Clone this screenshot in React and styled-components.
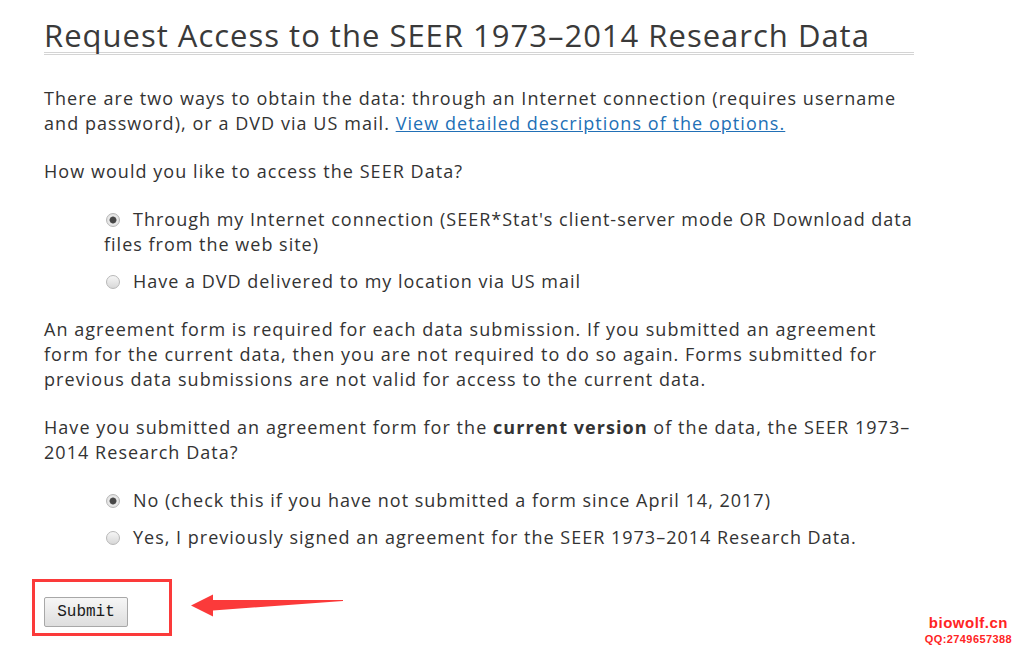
import styled, { createGlobalStyle } from "styled-components"

const GlobalStyle = createGlobalStyle`
  body {
    margin: 0;
    background: #fff;
    font-family: "Open Sans", "DejaVu Sans", sans-serif;
    color: #333;
  }
`

const Page = styled.div`
  position: relative;
  width: 1030px;
  height: 655px;
  overflow: hidden;
  padding: 18px 0 0 44px;
  box-sizing: border-box;
`
const Content = styled.div`
  width: 870px;
`
const Title = styled.h1`
  margin: 0 0 31px;
  font-family: "Open Sans", sans-serif;
  font-weight: 400;
  font-size: 31px;
  line-height: 34px;
  letter-spacing: 1px;
  color: #3a3a3a;
  border-bottom: 3px double #d4d4d4;
`
const Text = styled.p`
  margin: 23px 0;
  font-size: 18px;
  line-height: 25px;
  letter-spacing: 1.05px;
`
const Link = styled.a`
  color: #2270b6;
  text-decoration: underline;
`
const Options = styled.div`
  padding-left: 60px;
  margin: 23px 0;
  display: flex;
  flex-direction: column;
  gap: 12px;
`
const Option = styled.label`
  display: block;
  font-size: 18px;
  line-height: 25px;
  letter-spacing: 1px;
`
const Radio = styled.span`
  display: inline-block;
  width: 14px;
  height: 14px;
  margin: 0 13px 0 2px;
  vertical-align: -1px;
  border-radius: 50%;
  border: 1px solid #b8b8b8;
  box-sizing: border-box;
  background: ${props =>
    props.checked
      ? "radial-gradient(circle, #474747 0 2.8px, #8a8a8a 3.4px, #ececec 3.9px, #d4d4d4 100%)"
      : "linear-gradient(#f6f6f6, #d8d8d8)"};
`
const SubmitRow = styled.div`
  display: flex;
  align-items: flex-start;
  margin: 29px 0 0 -12px;
`
const Highlight = styled.div`
  width: 140px;
  height: 57px;
  box-sizing: border-box;
  border: 3px solid #fb3a3a;
  padding: 15px 0 0 9px;
`
const Button = styled.button`
  width: 84px;
  height: 30px;
  font-family: "Liberation Mono", monospace;
  font-size: 16px;
  color: #1a1a1a;
  border: 1px solid #a8a8a8;
  border-radius: 2px;
  background: linear-gradient(#f6f6f6, #dedede);
  padding: 0;
`
const Arrow = styled.svg`
  margin: 15px 0 0 19px;
`
const Watermark = styled.div`
  position: absolute;
  right: 18px;
  bottom: 10px;
  color: #ff2424;
  font-family: "Liberation Sans", sans-serif;
  font-weight: 700;
  text-align: center;
  line-height: 1;
`
const WaterSite = styled.div`
  font-size: 15px;
  letter-spacing: 0.5px;
`
const WaterQQ = styled.div`
  font-size: 11px;
  letter-spacing: 0.4px;
  margin-top: 4px;
`

const App = () => {
  return (
    <Page>
      <GlobalStyle />
      <Content>
        <Title>Request Access to the SEER 1973–2014 Research Data</Title>
        <Text>
          There are two ways to obtain the data: through an Internet connection (requires username
          and password), or a DVD via US mail. <Link href="#">View detailed descriptions of the options.</Link>
        </Text>
        <Text>How would you like to access the SEER Data?</Text>
        <Options>
          <Option><Radio checked />Through my Internet connection (SEER*Stat's client-server mode OR Download data files from the web site)</Option>
          <Option><Radio />Have a DVD delivered to my location via US mail</Option>
        </Options>
        <Text>
          An agreement form is required for each data submission. If you submitted an agreement
          form for the current data, then you are not required to do so again. Forms submitted for
          previous data submissions are not valid for access to the current data.
        </Text>
        <Text>
          Have you submitted an agreement form for the <b>current version</b> of the data, the SEER 1973–2014 Research Data?
        </Text>
        <Options>
          <Option><Radio checked />No (check this if you have not submitted a form since April 14, 2017)</Option>
          <Option><Radio />Yes, I previously signed an agreement for the SEER 1973–2014 Research Data.</Option>
        </Options>
        <SubmitRow>
          <Highlight>
            <Button>Submit</Button>
          </Highlight>
          <Arrow width="155" height="25" viewBox="0 0 155 25">
            <path d="M0 11.5 L22 0.5 L22 6 L152 6 L152 7 L22 16.5 L22 22.5 Z" fill="#fb3a3a" />
          </Arrow>
        </SubmitRow>
      </Content>
      <Watermark>
        <WaterSite>biowolf.cn</WaterSite>
        <WaterQQ>QQ:2749657388</WaterQQ>
      </Watermark>
    </Page>
  )
}

export default App
